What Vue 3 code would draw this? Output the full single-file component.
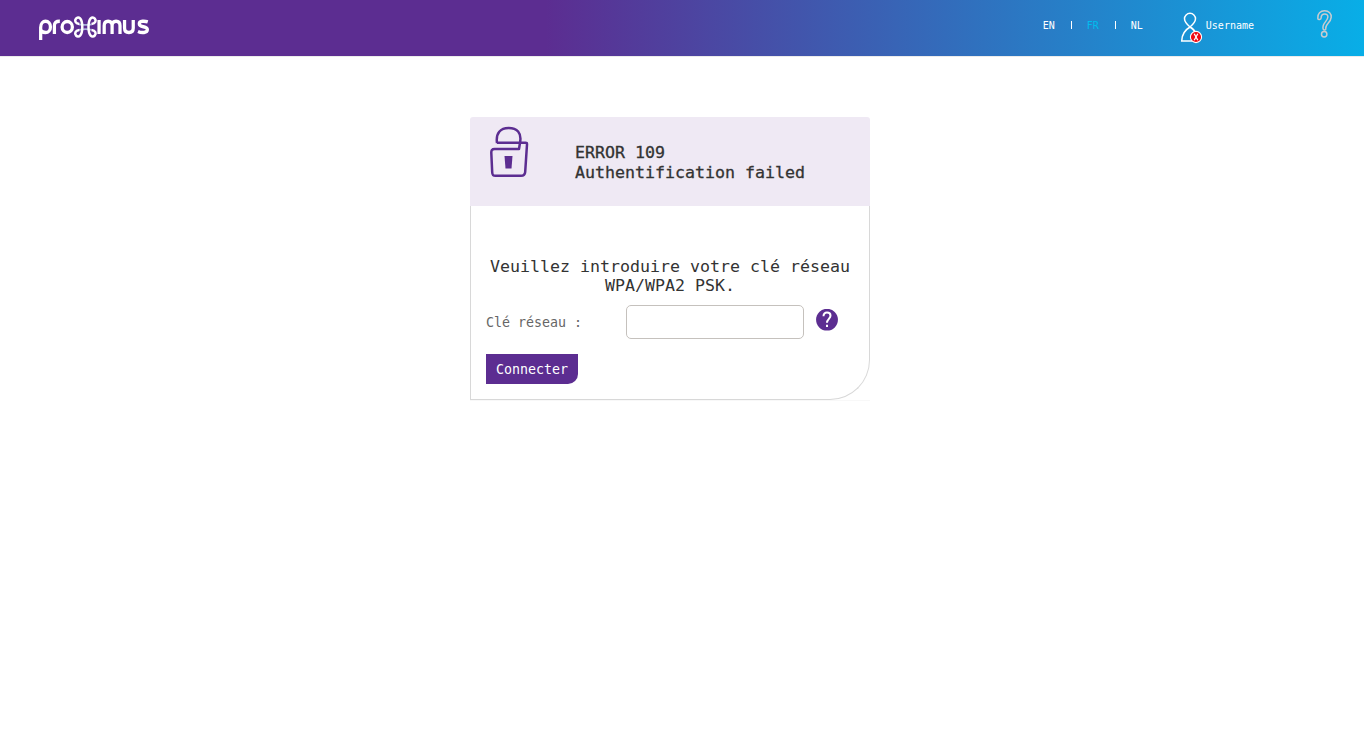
<script setup>
import { ref } from 'vue'

const languages = ['EN', 'FR', 'NL']
const current = ref('FR')
const networkKey = ref('')
</script>

<template>
  <div class="page">
    <header class="topbar">
      <svg class="logo" width="114" height="30" viewBox="0 0 114 30" fill="none" stroke="#fff" stroke-width="3.300">
        <g transform="translate(0.100 0.200) scale(0.988 1.050)">
          <path d="M2.600 26.500V14.500C2.600 10.700 5 8.700 7.500 8.700c3 0 5 2.300 5 5.300s-2 5.400-5 5.400c-2 0-3.600-.8-4.900-2.300" />
          <path d="M16.500 20.800V13c0-3 1.500-4.400 5.500-4.300" />
          <circle cx="29.500" cy="14.100" r="5.200" />
          <path d="M61.700 7.400v13.400M66.900 20.800V13c0-2.900 1.500-4.300 4-4.300s4 1.400 4 4.300v7.800M74.900 13c0-2.900 1.500-4.300 4-4.300s4 1.400 4 4.300v7.800" />
          <path d="M87.500 7.400v7.700c0 2.900 1.700 4.300 4.400 4.300s4.400-1.400 4.400-4.300V7.400" />
          <path d="M111 9.200c-3-1-8.600-1.200-8.600 1.700 0 4 8.200 1.900 8.200 5.600 0 3.300-5.800 3.500-9.500 1.900" />
        </g>
        <g stroke-width="2.500">
          <path d="M41 12.300c4 .8 9 .8 12.500 0M41 17.800c4-.8 9-.8 12.500 0" stroke="#a9b2da" stroke-width="1.800" />
          <path d="M41.300 12C37 11.500 36.400 8.500 38 6.600 40.500 3.900 44.300 6 44.300 15S40.500 26 38 23.500C36.400 21.500 37 18.500 41.300 18" />
          <path d="M53.500 12C57.800 11.500 58.400 8.500 56.800 6.600 54.300 3.900 50.500 6 50.500 15S54.300 26 56.800 23.500C58.400 21.500 57.800 18.500 53.500 18" />
        </g>
      </svg>
      <div class="tools">
        <nav class="langs">
          <template v-for="(lang, i) in languages" :key="lang">
            <span v-if="i" class="bar"></span>
            <a :class="{ active: lang === current }" @click="current = lang">{{ lang }}</a>
          </template>
        </nav>
        <div class="user">
          <svg width="24" height="34" viewBox="0 0 24 34" fill="none">
            <path d="M10 16C6.500 13 4.500 11 4.500 7.800a5.500 5.500 0 0 1 11 0C15.500 11 13.500 13 10 16zM10 16C4 19.500 1.800 24 1.700 30H17M10 16c3.200 1.700 5 4 6.200 7" stroke="#fff" stroke-width="1.500" />
            <circle cx="16" cy="26" r="5.600" fill="#f00a12" stroke="#fff" stroke-width="1.100" />
            <path d="M14.200 22.800l3.600 6.400M17.800 22.800l-3.600 6.400" stroke="#fff" stroke-width="1.300" />
          </svg>
          <span>Username</span>
        </div>
        <svg class="help" width="18" height="30" viewBox="0 0 18 30" fill="none" stroke="#c8ccd0" stroke-width="1.500">
          <path d="M1.800 9.300C1.300 4.400 4.600 1.800 8.600 1.800c4.300 0 7 2.800 6.600 6.500-.5 5.400-6.200 6.800-5.400 11.200a1.200 1.200 0 0 1-2.700.4C5.600 14.500 11.600 12.500 11.900 8c.1-2-1.300-3-3.200-3C6.500 5 5.100 6.400 5.100 9.100c0 1.900-3.100 2-3.300.2z" />
          <circle cx="8.200" cy="25.200" r="2.700" />
        </svg>
      </div>
    </header>

    <main class="card">
      <div class="card-head">
        <svg class="lock" width="40" height="52" viewBox="0 0 40 52" fill="none" stroke="#5c2d91" stroke-width="2.500" stroke-linejoin="round">
          <path d="M8 17.200C6.600 7 11.500 2 19.700 2c8.500 0 12.800 5 11.500 13.500L30 23H5.500C3 23 2.200 24.300 2.300 26.800l.9 19.300c.1 2.800.8 3.700 3.300 3.700H32c3 0 4-1 4.200-4L38 18.500c.1-1.500-.4-1.900-1.700-1.800L8 16.800" />
          <path d="M15.500 30h8l-1 12.500h-6z" fill="#5c2d91" stroke="none" />
        </svg>
        <h1>ERROR 109<br>Authentification failed</h1>
      </div>
      <form class="card-body" @submit.prevent>
        <p>Veuillez introduire votre clé réseau WPA/WPA2 PSK.</p>
        <div class="row">
          <label for="key">Clé réseau :</label>
          <input id="key" v-model="networkKey" type="text">
          <svg class="hint" width="22" height="22" viewBox="0 0 22 22">
            <circle cx="11" cy="10.700" r="10.900" fill="#5c2d91" />
            <path d="M7.500 7.300c0-2.400 1.400-3.700 3.500-3.700s3.500 1.300 3.500 3.200c0 3-3.500 3.300-3.500 7M11 15.700v2.300" fill="none" stroke="#fff" stroke-width="2" />
          </svg>
        </div>
        <button type="submit">Connecter</button>
      </form>
    </main>
  </div>
</template>

<style>
body { margin: 0; background: #fff; }
</style>

<style scoped>
.page {
  min-height: 752px;
  font-family: "DejaVu Sans Mono", "Liberation Mono", monospace;
}
.topbar {
  box-sizing: border-box;
  height: 57px;
  border-bottom: 1px solid #ebebeb;
  display: flex;
  justify-content: space-between;
  align-items: flex-start;
  background: linear-gradient(90deg, #5c2d91 0, #5c2d91 40%, #08aee7 100%);
  color: #fff;
  font-size: 10px;
}
.logo { margin: 12px 0 0 38px; }
.tools { display: flex; align-items: flex-start; }
.langs {
  display: flex;
  align-items: center;
  margin-top: 17px;
  height: 16px;
}
.langs a { width: 13px; cursor: pointer; }
.langs .active { color: #00bcee; }
.bar {
  width: 1px;
  height: 8px;
  margin: 0 15px;
  background: #fff;
}
.user {
  display: flex;
  margin: 11px 0 0 36px;
}
.user span { margin: 7px 0 0 2px; line-height: 16px; }
.help { margin: 9px 30px 0 62px; }
.card {
  width: 400px;
  margin: 60px 0 0 470px;
  height: 284px;
  border-bottom: 1px solid #f8f8f8;
  box-sizing: border-box;
}
.card-head {
  height: 89px;
  box-sizing: border-box;
  display: flex;
  align-items: flex-start;
  padding: 9px 19px;
  background: #efe9f4;
  border-radius: 3px 3px 0 0;
}
h1 {
  margin: 17px 0 0 46px;
  font-size: 16.610px;
  line-height: 20px;
  font-weight: 400;
  color: #333;
  -webkit-text-stroke: 0.300px #333;
}
.card-body {
  box-sizing: border-box;
  height: 194px;
  padding: 51px 15px 0;
  border: 1px solid #d8d8d8;
  border-top: 0;
  border-radius: 0 0 40px 0;
}
p {
  margin: 0;
  text-align: center;
  font-size: 16.610px;
  line-height: 19px;
  color: #333;
}
.row {
  display: flex;
  align-items: center;
  height: 34px;
  margin-top: 10px;
}
label {
  width: 140px;
  font-size: 13.290px;
  color: #666;
}
input {
  box-sizing: border-box;
  width: 178px;
  height: 34px;
  padding: 0 8px;
  border: 1px solid #c5c1bd;
  border-radius: 5px;
  background: #fff;
  font: inherit;
}
.hint { margin: -5px 0 0 12px; }
button {
  display: block;
  width: 92px;
  height: 30px;
  margin: 15px 0 0;
  padding: 0;
  border: 0;
  border-radius: 0 0 10px 0;
  background: #5c2d91;
  color: #fff;
  font-family: inherit;
  font-size: 13.290px;
}
</style>
